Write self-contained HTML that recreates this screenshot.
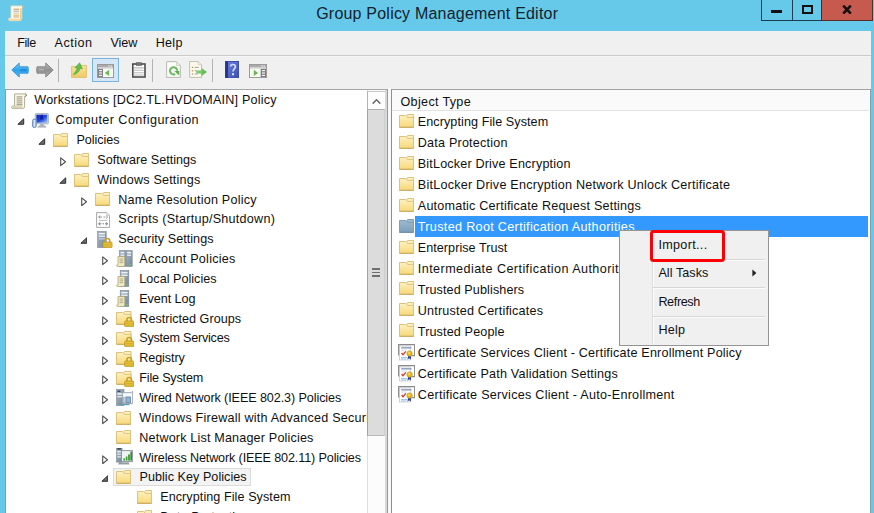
<!DOCTYPE html>
<html><head><meta charset="utf-8"><title>Group Policy Management Editor</title>
<style>
html,body{margin:0;padding:0}
body{width:874px;height:513px;overflow:hidden;position:relative;background:#66c9ea;font-family:"Liberation Sans", Arial, sans-serif;}
.a{position:absolute;line-height:0}
.a svg{display:block}
.t{position:absolute;white-space:nowrap;line-height:16px;height:16px}
.box{position:absolute;box-sizing:border-box}
</style></head><body>

<div class="a" style="left:7.70px;top:5.20px"><svg width="16.5" height="16.5" viewBox="0 0 16.5 16.5" ><path d="M3 0.9 H14 C15.9 0.9 15.9 3.4 14 3.4 H13.8 V12.8 C13.8 14.6 13 15.7 11.4 15.7 H1.8 C0.2 15.7 0.2 13.1 1.8 13.1 H3 Z" fill="#fffcf0" stroke="#ead9ae" stroke-width="0.9"/>
<path d="M12.6 3.6 V13 C12.6 14 12.2 14.8 11.4 15.2" stroke="#ecc98c" stroke-width="1.3" fill="none"/>
<path d="M1.4 14.5 H11.4" stroke="#f2d796" stroke-width="1.5"/>
<path d="M14.2 1.2 C15.6 1.6 15.4 3.2 14.4 3.3" stroke="#8d8f86" stroke-width="0.9" fill="none"/>
<path d="M5.4 4.2 H11" stroke="#c98f5a" stroke-width="1"/><path d="M5.4 6.2 H11" stroke="#a9a79a" stroke-width="1"/><path d="M5.4 8.2 H11" stroke="#c9c7b8" stroke-width="1"/><path d="M5.4 10.2 H11" stroke="#e0b050" stroke-width="1"/><path d="M5.4 12 H11" stroke="#c9a06a" stroke-width="1"/></svg></div>
<div class="t" style="left:316.20px;top:6.46px;font-size:16px;letter-spacing:0.211px;color:#15222a;">Group Policy Management Editor</div>
<div class="box" style="left:761px;top:0;width:32px;height:21px;border-left:1px solid #1d3c52;border-bottom:1px solid #1d3c52;border-right:1px solid #1d3c52"></div>
<div class="box" style="left:792px;top:0;width:30px;height:21px;border-bottom:1px solid #1d3c52;border-right:1px solid #1d3c52"></div>
<div class="box" style="left:822px;top:0;width:50.5px;height:21px;background:#c75a4f;border-bottom:1px solid #5a2a2a;border-right:1px solid #5a2a2a"></div>
<div class="box" style="left:771.3px;top:9.7px;width:11px;height:3.6px;background:#111"></div>
<div class="box" style="left:802.2px;top:5px;width:10.6px;height:8.5px;border:2px solid #111;border-top-width:2.2px"></div>
<div class="a" style="left:842.00px;top:4.50px"><svg width="10" height="9.2" viewBox="0 0 10 9.2" ><path d="M1.2 0.6 L8.8 8.6 M8.8 0.6 L1.2 8.6" stroke="#111" stroke-width="2.6" fill="none"/></svg></div>
<div class="box" style="left:5px;top:30.8px;width:865.8px;height:483px;background:#f0f0f0"></div>
<div class="t" style="left:17.20px;top:35.43px;font-size:12.6px;letter-spacing:-0.432px;color:#101010;">File</div>
<div class="t" style="left:54.50px;top:35.43px;font-size:12.6px;letter-spacing:0.497px;color:#101010;">Action</div>
<div class="t" style="left:110.50px;top:35.43px;font-size:12.6px;letter-spacing:-0.093px;color:#101010;">View</div>
<div class="t" style="left:155.80px;top:35.43px;font-size:12.6px;letter-spacing:0.231px;color:#101010;">Help</div>
<div class="box" style="left:5px;top:55px;width:865.6px;height:1px;background:#cacaca"></div>
<div class="box" style="left:5px;top:56px;width:865.6px;height:1px;background:#f6f6f6"></div>
<div class="a" style="left:10.60px;top:62.40px"><svg width="18" height="16" viewBox="0 0 18 16" ><defs><linearGradient id="g1" x1="0" y1="0" x2="0" y2="1"><stop offset="0" stop-color="#7ccdf6"/><stop offset="0.5" stop-color="#2da3ea"/><stop offset="1" stop-color="#58b6ee"/></linearGradient></defs>
<path d="M0.8 8 L8.2 1 V4.8 H17 Q17.6 8 17 11.2 H8.2 V15 Z" fill="url(#g1)" stroke="#3b9bdc" stroke-width="1" stroke-linejoin="round"/>
<path d="M9.4 8.2 H15.4" stroke="#1b7cd8" stroke-width="2.4" opacity="0.6"/></svg></div>
<div class="a" style="left:36.00px;top:62.40px"><svg width="18" height="16" viewBox="0 0 18 16" ><defs><linearGradient id="g2" x1="0" y1="0" x2="0" y2="1"><stop offset="0" stop-color="#bdbdbd"/><stop offset="0.5" stop-color="#8f8f8f"/><stop offset="1" stop-color="#adadad"/></linearGradient></defs>
<path d="M17.2 8 L9.8 1 V4.8 H1 Q0.4 8 1 11.2 H9.8 V15 Z" fill="url(#g2)" stroke="#8a8a8a" stroke-width="1" stroke-linejoin="round"/>
<path d="M2.6 7.6 H8" stroke="#b9b9b9" stroke-width="1.6" opacity="0.8"/></svg></div>
<div class="box" style="left:58px;top:58.5px;width:1px;height:23px;background:#b4b4b4"></div>
<div class="box" style="left:152.3px;top:58.5px;width:1px;height:23px;background:#b4b4b4"></div>
<div class="box" style="left:211.5px;top:58.5px;width:1px;height:23px;background:#b4b4b4"></div>
<div class="a" style="left:71.20px;top:62.00px"><svg width="16" height="16" viewBox="0 0 16 16" ><defs><linearGradient id="g3" x1="0" y1="0" x2="0" y2="1"><stop offset="0" stop-color="#f8e4a0"/><stop offset="1" stop-color="#f0cb68"/></linearGradient></defs>
<path d="M0.6 4.6 H6.4 L7.6 3.4 H15.4 V15.4 H0.6 Z" fill="url(#g3)" stroke="#dcbc66" stroke-width="0.9"/>
<path d="M2.4 12.8 C3.6 10.4 5.6 8.8 6.4 6.2 L4 5.8 L8.6 0.8 L11.4 6.8 L9 6.4 C8.4 9.6 6.4 11.4 2.4 12.8 Z" fill="#62bf50" stroke="#46a838" stroke-width="0.6"/></svg></div>
<div class="box" style="left:92.3px;top:57.6px;width:26.4px;height:24px;background:#d5e7f6;border:1.6px solid #78b4e2"></div>
<div class="a" style="left:97.00px;top:64.00px"><svg width="17" height="14" viewBox="0 0 17 14" ><rect x="0.5" y="0.5" width="16" height="13" fill="#fbfbfb" stroke="#9a9a9a" stroke-width="1"/>
<rect x="1" y="1" width="15" height="2.6" fill="#ababab"/>
<rect x="11.4" y="1.4" width="1.3" height="1.3" fill="#e8e8e8"/><rect x="13.6" y="1.4" width="1.3" height="1.3" fill="#e8e8e8"/>
<rect x="1" y="3.6" width="15" height="1.2" fill="#d9d9d9"/>
<rect x="1" y="4.8" width="5" height="8.2" fill="#7f7f7f"/>
<rect x="2" y="6" width="3" height="1.2" fill="#f5f5f5"/><rect x="2" y="8.4" width="3" height="1.2" fill="#f5f5f5"/><rect x="2" y="10.8" width="3" height="1.2" fill="#f5f5f5"/>
<rect x="6.4" y="5" width="9.4" height="7.8" fill="#f4faef"/>
<path d="M12.2 5.8 V12 L7.8 8.9 Z" fill="#71b25c"/></svg></div>
<div class="a" style="left:131.60px;top:61.60px"><svg width="14" height="16" viewBox="0 0 14 16" ><rect x="0.8" y="2" width="12.2" height="13" fill="#ffffff" stroke="#4c4c4c" stroke-width="1.6"/>
<path d="M4.2 0.7 H9.6 V3.4 H4.2 Z" fill="#7c7c7c" stroke="#555" stroke-width="0.7"/>
<path d="M2 5.9 H11.8 M2 8.3 H11.8 M2 10.7 H11.8 M2 13 H11.8" stroke="#b9b9b9" stroke-width="1.1"/></svg></div>
<div class="a" style="left:165.60px;top:61.00px"><svg width="15" height="17" viewBox="0 0 15 17" ><path d="M0.6 0.6 H10.4 L14.4 4.4 V16.4 H0.6 Z" fill="#fafaf7" stroke="#b4b4ac" stroke-width="0.9"/>
<path d="M10.4 0.6 V4.4 H14.4" fill="#ecece6" stroke="#c6c6bd" stroke-width="0.7"/>
<path d="M11.2 9.8 A3.6 3.6 0 1 0 9.2 13" fill="none" stroke="#6cba62" stroke-width="2"/>
<path d="M8.4 10 H13.2 V14.6 Z" fill="#58ad4e"/></svg></div>
<div class="a" style="left:189.00px;top:61.00px"><svg width="18" height="17" viewBox="0 0 18 17" ><defs><linearGradient id="g4" x1="0" y1="0" x2="1" y2="0"><stop offset="0" stop-color="#9bd68c"/><stop offset="1" stop-color="#4fb43e"/></linearGradient></defs>
<path d="M0.6 0.6 H9.2 L12.6 3.8 V16.4 H0.6 Z" fill="#fcfaef" stroke="#bdb8a2" stroke-width="0.9"/>
<path d="M9.2 0.6 V3.8 H12.6" fill="#efead6" stroke="#cfc8ae" stroke-width="0.7"/>
<rect x="2.8" y="5.8" width="1.2" height="1.2" fill="#b98a3e"/><rect x="2.8" y="9.2" width="1.2" height="1.2" fill="#b98a3e"/><rect x="2.8" y="12.4" width="1.2" height="1.2" fill="#b98a3e"/>
<path d="M5.6 6.4 H9.8 M5.6 9.8 H7.6 M5.6 13 H8.6" stroke="#a4a49c" stroke-width="1"/>
<path d="M7.6 9.8 H12.8 V7.6 L17.6 11 L12.8 14.4 V12.2 H7.6 Z" fill="url(#g4)" stroke="#63b955" stroke-width="0.5"/></svg></div>
<div class="a" style="left:224.60px;top:61.00px"><svg width="14" height="17" viewBox="0 0 14 17" ><defs><linearGradient id="g5" x1="0" y1="0" x2="1" y2="1"><stop offset="0" stop-color="#6c80dc"/><stop offset="1" stop-color="#3a50b8"/></linearGradient></defs>
<rect x="0.4" y="0.4" width="13.2" height="16.4" fill="url(#g5)" stroke="#2c3c96" stroke-width="0.8"/>
<rect x="0.4" y="0.4" width="2.6" height="16.4" fill="#26348c"/>
<path d="M5.6 5.6 C5.6 2.8 10.4 2.8 10.4 5.6 C10.4 7.8 8 8 8 10.6" fill="none" stroke="#d4dcfa" stroke-width="1.7"/>
<rect x="7" y="12.2" width="2" height="2" fill="#e6ebfd"/></svg></div>
<div class="a" style="left:249.00px;top:64.20px"><svg width="18" height="14" viewBox="0 0 18 14" ><rect x="0.5" y="0.5" width="17" height="13" fill="#fbfbfb" stroke="#9a9a9a" stroke-width="1"/>
<rect x="1" y="1" width="16" height="2.6" fill="#ababab"/>
<rect x="12.4" y="1.4" width="1.3" height="1.3" fill="#e8e8e8"/><rect x="14.6" y="1.4" width="1.3" height="1.3" fill="#e8e8e8"/>
<rect x="1" y="3.6" width="16" height="1.2" fill="#d9d9d9"/>
<rect x="11.6" y="4.8" width="5.4" height="8.2" fill="#7f7f7f"/>
<rect x="13" y="6" width="3" height="1.2" fill="#f5f5f5"/><rect x="13" y="8.4" width="3" height="1.2" fill="#f5f5f5"/><rect x="13" y="10.8" width="3" height="1.2" fill="#f5f5f5"/>
<rect x="1.2" y="5" width="10" height="7.8" fill="#f4faef"/>
<path d="M4.8 5.8 V12 L9.2 8.9 Z" fill="#71b25c"/></svg></div>
<div class="box" style="left:4.8px;top:88.5px;width:383.2px;height:430px;background:#fff;border:1px solid #a6a6a6;border-left-color:#789fb8;overflow:hidden"></div>
<div class="box" style="left:6px;top:89.5px;width:361px;height:424px;overflow:hidden">
<div class="a" style="left:4.80px;top:3.45px"><svg width="16.5" height="16.5" viewBox="0 0 16.5 16.5" ><path d="M3.6 0.9 H14.2 C16.1 0.9 16.1 3.4 14.2 3.4 H13.6 V12.8 C13.6 14.6 12.8 15.7 11.2 15.7 H1.8 C0.2 15.7 0.2 13.1 1.8 13.1 H3.6 Z" fill="#fcf9e8" stroke="#aaa38a" stroke-width="0.9"/>
<path d="M1.6 14.4 H11.4" stroke="#dcd3b2" stroke-width="1.3"/>
<path d="M14.2 1.2 C15.8 1.6 15.6 3.2 14.4 3.3" stroke="#77766c" stroke-width="0.9" fill="none"/>
<path d="M3.6 13.1 H11.4" stroke="#bdb497" stroke-width="0.7"/>
<path d="M5.6 3.9 H11.4 M5.6 5.9 H11.4 M5.6 7.9 H11.4 M5.6 9.9 H11.4 M5.6 11.7 H11.4" stroke="#8c8a7c" stroke-width="0.95"/></svg></div>
<div class="t" style="left:28.30px;top:2.88px;font-size:12.6px;letter-spacing:0.203px;color:#101010;">Workstations [DC2.TL.HVDOMAIN] Policy</div>
<div class="a" style="left:25.95px;top:23.49px"><svg width="17" height="15" viewBox="0 0 17 15" ><defs><linearGradient id="g6" x1="0" y1="0" x2="1" y2="1"><stop offset="0" stop-color="#0a1fb8"/><stop offset="0.55" stop-color="#2a4fe0"/><stop offset="1" stop-color="#9fc4f4"/></linearGradient></defs>
<rect x="3.2" y="0.6" width="13.2" height="10.2" rx="0.8" fill="#c9d4de" stroke="#9aa9b8" stroke-width="0.8"/>
<rect x="4.4" y="1.8" width="10.8" height="7.8" fill="url(#g6)"/>
<path d="M9 1.8 L7.6 6.5 H11.5 L10.6 1.8 Z" fill="#0a1aa0" opacity="0.85"/>
<rect x="8.2" y="10.8" width="3.4" height="2" fill="#aab2ba"/>
<path d="M5.6 14.2 L7 12.8 H12.8 L14.2 14.2 Z" fill="#b9c0c7" stroke="#8f979f" stroke-width="0.5"/>
<rect x="0.6" y="6" width="3.6" height="8.6" rx="1.6" fill="#a9c6ec" stroke="#5b83c0" stroke-width="0.9"/>
<path d="M2.4 7 V13.6" stroke="#e9f2fc" stroke-width="0.9"/></svg></div>
<div class="a" style="left:11.25px;top:28.39px"><svg width="7.4" height="7" viewBox="0 0 7.4 7" ><path d="M6.7 0.8 V6.3 H0.9 Z" fill="#6a6a6a" stroke="#2e2e2e" stroke-width="1" stroke-linejoin="round"/></svg></div>
<div class="t" style="left:49.60px;top:22.73px;font-size:12.6px;letter-spacing:0.442px;color:#101010;">Computer Configuration</div>
<div class="a" style="left:47.40px;top:43.33px"><svg width="15" height="14" viewBox="0 0 15 14" ><defs><linearGradient id="g7" x1="0" y1="0" x2="0" y2="1"><stop offset="0" stop-color="#fdf1c0"/><stop offset="1" stop-color="#f8d878"/></linearGradient></defs>
<path d="M7.2 3.2 L8.6 0.5 H14.5 V13 H7.2 Z" fill="#fdf1c0" stroke="#dcc27c" stroke-width="1"/>
<path d="M0.5 1.5 H6.6 C7.6 1.5 7.4 3.4 8.6 3.4 H14.5 V13.3 H0.5 Z" fill="url(#g7)" stroke="#dcc27c" stroke-width="1"/>
<path d="M0.5 13.3 H14.5" stroke="#c9aa5e" stroke-width="1" fill="none"/></svg></div>
<div class="a" style="left:32.20px;top:48.23px"><svg width="7.4" height="7" viewBox="0 0 7.4 7" ><path d="M6.7 0.8 V6.3 H0.9 Z" fill="#6a6a6a" stroke="#2e2e2e" stroke-width="1" stroke-linejoin="round"/></svg></div>
<div class="t" style="left:70.50px;top:42.57px;font-size:12.6px;letter-spacing:-0.044px;color:#101010;">Policies</div>
<div class="a" style="left:68.35px;top:63.18px"><svg width="15" height="14" viewBox="0 0 15 14" ><defs><linearGradient id="g8" x1="0" y1="0" x2="0" y2="1"><stop offset="0" stop-color="#fdf1c0"/><stop offset="1" stop-color="#f8d878"/></linearGradient></defs>
<path d="M7.2 3.2 L8.6 0.5 H14.5 V13 H7.2 Z" fill="#fdf1c0" stroke="#dcc27c" stroke-width="1"/>
<path d="M0.5 1.5 H6.6 C7.6 1.5 7.4 3.4 8.6 3.4 H14.5 V13.3 H0.5 Z" fill="url(#g8)" stroke="#dcc27c" stroke-width="1"/>
<path d="M0.5 13.3 H14.5" stroke="#c9aa5e" stroke-width="1" fill="none"/></svg></div>
<div class="a" style="left:54.35px;top:67.58px"><svg width="6.4" height="9.6" viewBox="0 0 6.4 9.6" ><path d="M0.7 0.9 V8.7 L5.5 4.8 Z" fill="#fff" stroke="#4e4e4e" stroke-width="1.1" stroke-linejoin="round"/></svg></div>
<div class="t" style="left:91.30px;top:62.41px;font-size:12.6px;letter-spacing:0.025px;color:#101010;">Software Settings</div>
<div class="a" style="left:68.35px;top:83.02px"><svg width="15" height="14" viewBox="0 0 15 14" ><defs><linearGradient id="g9" x1="0" y1="0" x2="0" y2="1"><stop offset="0" stop-color="#fdf1c0"/><stop offset="1" stop-color="#f8d878"/></linearGradient></defs>
<path d="M7.2 3.2 L8.6 0.5 H14.5 V13 H7.2 Z" fill="#fdf1c0" stroke="#dcc27c" stroke-width="1"/>
<path d="M0.5 1.5 H6.6 C7.6 1.5 7.4 3.4 8.6 3.4 H14.5 V13.3 H0.5 Z" fill="url(#g9)" stroke="#dcc27c" stroke-width="1"/>
<path d="M0.5 13.3 H14.5" stroke="#c9aa5e" stroke-width="1" fill="none"/></svg></div>
<div class="a" style="left:53.15px;top:87.92px"><svg width="7.4" height="7" viewBox="0 0 7.4 7" ><path d="M6.7 0.8 V6.3 H0.9 Z" fill="#6a6a6a" stroke="#2e2e2e" stroke-width="1" stroke-linejoin="round"/></svg></div>
<div class="t" style="left:91.30px;top:82.25px;font-size:12.6px;letter-spacing:0.187px;color:#101010;">Windows Settings</div>
<div class="a" style="left:89.30px;top:102.86px"><svg width="15" height="14" viewBox="0 0 15 14" ><defs><linearGradient id="g10" x1="0" y1="0" x2="0" y2="1"><stop offset="0" stop-color="#fdf1c0"/><stop offset="1" stop-color="#f8d878"/></linearGradient></defs>
<path d="M7.2 3.2 L8.6 0.5 H14.5 V13 H7.2 Z" fill="#fdf1c0" stroke="#dcc27c" stroke-width="1"/>
<path d="M0.5 1.5 H6.6 C7.6 1.5 7.4 3.4 8.6 3.4 H14.5 V13.3 H0.5 Z" fill="url(#g10)" stroke="#dcc27c" stroke-width="1"/>
<path d="M0.5 13.3 H14.5" stroke="#c9aa5e" stroke-width="1" fill="none"/></svg></div>
<div class="a" style="left:75.30px;top:107.26px"><svg width="6.4" height="9.6" viewBox="0 0 6.4 9.6" ><path d="M0.7 0.9 V8.7 L5.5 4.8 Z" fill="#fff" stroke="#4e4e4e" stroke-width="1.1" stroke-linejoin="round"/></svg></div>
<div class="t" style="left:112.30px;top:102.09px;font-size:12.6px;letter-spacing:0.214px;color:#101010;">Name Resolution Policy</div>
<div class="a" style="left:89.80px;top:122.60px"><svg width="14" height="16" viewBox="0 0 14 16" ><path d="M0.6 0.6 H10.8 L13.6 3.4 V15.4 H0.6 Z" fill="#ffffff" stroke="#a6a6a6" stroke-width="1"/>
<path d="M10.8 0.6 V3.4 H13.6" fill="#f1f1f1" stroke="#bdbdbd" stroke-width="0.7"/>
<path d="M4.2 3.6 L2.6 5 L4.2 6.4 M2.8 5 H6 M7.4 5 H9.2 M10 3.6 L11.6 5 L10 6.4" fill="none" stroke="#8d8d8d" stroke-width="0.9"/>
<path d="M3 8.4 H11.2" stroke="#b5b5b5" stroke-width="0.9"/>
<path d="M4.2 10.4 L2.6 11.8 L4.2 13.2 M2.8 11.8 H5.4 M6.6 11.8 H8 M10 10.4 L11.6 11.8 L10 13.2 M9 11.8 H11.4" fill="none" stroke="#6f6f6f" stroke-width="0.9"/></svg></div>
<div class="t" style="left:112.30px;top:121.94px;font-size:12.6px;letter-spacing:0.244px;color:#101010;">Scripts (Startup/Shutdown)</div>
<div class="a" style="left:90.70px;top:141.14px"><svg width="16" height="17" viewBox="0 0 16 17" ><defs><linearGradient id="g11" x1="0" y1="0" x2="1" y2="1"><stop offset="0" stop-color="#a9b5c0"/><stop offset="1" stop-color="#74889a"/></linearGradient></defs><rect x="0.6" y="0.5" width="8.6" height="16" fill="url(#g11)" stroke="#7b8894" stroke-width="0.6"/>
<rect x="1.7999999999999998" y="1.9" width="6.199999999999999" height="1.5" fill="#eef3f8"/>
<rect x="1.7999999999999998" y="4.5" width="6.199999999999999" height="1.5" fill="#dfe8f0"/>
<rect x="6.6" y="13.9" width="1.6" height="1.6" fill="#7fbf6a"/><rect x="1.8" y="7.2" width="6.2" height="1.2" fill="#c8d2dc"/><path d="M8.2 11.3 V9.8 a2.3 2.3 0 0 1 4.6 0 V11.3" fill="none" stroke="#c9a227" stroke-width="1.6"/>
<rect x="6" y="11.1" width="9" height="5.7" rx="0.8" fill="#e9c53a" stroke="#b8901c" stroke-width="0.8"/>
<path d="M6.8 13.399999999999999 H14.2 M6.8 15.100000000000001 H14.2" stroke="#c9a227" stroke-width="0.7"/></svg></div>
<div class="a" style="left:74.10px;top:147.44px"><svg width="7.4" height="7" viewBox="0 0 7.4 7" ><path d="M6.7 0.8 V6.3 H0.9 Z" fill="#6a6a6a" stroke="#2e2e2e" stroke-width="1" stroke-linejoin="round"/></svg></div>
<div class="t" style="left:112.30px;top:141.78px;font-size:12.6px;letter-spacing:0.044px;color:#101010;">Security Settings</div>
<div class="a" style="left:109.75px;top:160.79px"><svg width="17" height="17" viewBox="0 0 17 17" ><defs><linearGradient id="g12" x1="0" y1="0" x2="1" y2="1"><stop offset="0" stop-color="#a9b5c0"/><stop offset="1" stop-color="#74889a"/></linearGradient></defs><rect x="3.4" y="0.5" width="6.2" height="16" fill="url(#g12)" stroke="#7b8894" stroke-width="0.6"/>
<rect x="4.6" y="1.9" width="3.8000000000000003" height="1.5" fill="#eef3f8"/>
<rect x="4.6" y="4.5" width="3.8000000000000003" height="1.5" fill="#dfe8f0"/>
<rect x="7.0" y="13.9" width="1.6" height="1.6" fill="#7fbf6a"/><rect x="10" y="0.5" width="6.2" height="16" fill="url(#g12)" stroke="#7b8894" stroke-width="0.6"/>
<rect x="11.2" y="1.9" width="3.8000000000000003" height="1.5" fill="#eef3f8"/>
<rect x="11.2" y="4.5" width="3.8000000000000003" height="1.5" fill="#dfe8f0"/>
<rect x="13.6" y="13.9" width="1.6" height="1.6" fill="#7fbf6a"/><path d="M2.0 6.6 H8.8 V14.799999999999999 C8.8 16.2 7.8 16.6 6.8 16.6 H1.4 C0.4 16.6 0.4 14.799999999999999 1.4 14.799999999999999 H2.0 Z" fill="#f1e9c4" stroke="#a89d70" stroke-width="0.75"/>
<path d="M3.5999999999999996 9.0 H7.2 M3.5999999999999996 10.8 H7.2 M3.5999999999999996 12.6 H7.2" stroke="#a39a78" stroke-width="0.8"/></svg></div>
<div class="a" style="left:96.25px;top:166.79px"><svg width="6.4" height="9.6" viewBox="0 0 6.4 9.6" ><path d="M0.7 0.9 V8.7 L5.5 4.8 Z" fill="#fff" stroke="#4e4e4e" stroke-width="1.1" stroke-linejoin="round"/></svg></div>
<div class="t" style="left:133.30px;top:161.62px;font-size:12.6px;letter-spacing:0.24px;color:#101010;">Account Policies</div>
<div class="a" style="left:109.75px;top:180.63px"><svg width="14" height="17" viewBox="0 0 14 17" ><defs><linearGradient id="g13" x1="0" y1="0" x2="1" y2="1"><stop offset="0" stop-color="#a9b5c0"/><stop offset="1" stop-color="#74889a"/></linearGradient></defs><rect x="4.2" y="0.5" width="8.6" height="16" fill="url(#g13)" stroke="#7b8894" stroke-width="0.6"/>
<rect x="5.4" y="1.9" width="6.199999999999999" height="1.5" fill="#eef3f8"/>
<rect x="5.4" y="4.5" width="6.199999999999999" height="1.5" fill="#dfe8f0"/>
<rect x="10.200000000000001" y="13.9" width="1.6" height="1.6" fill="#7fbf6a"/><path d="M2.0 6.6 H8.8 V14.799999999999999 C8.8 16.2 7.8 16.6 6.8 16.6 H1.4 C0.4 16.6 0.4 14.799999999999999 1.4 14.799999999999999 H2.0 Z" fill="#f1e9c4" stroke="#a89d70" stroke-width="0.75"/>
<path d="M3.5999999999999996 9.0 H7.2 M3.5999999999999996 10.8 H7.2 M3.5999999999999996 12.6 H7.2" stroke="#a39a78" stroke-width="0.8"/></svg></div>
<div class="a" style="left:96.25px;top:186.63px"><svg width="6.4" height="9.6" viewBox="0 0 6.4 9.6" ><path d="M0.7 0.9 V8.7 L5.5 4.8 Z" fill="#fff" stroke="#4e4e4e" stroke-width="1.1" stroke-linejoin="round"/></svg></div>
<div class="t" style="left:133.30px;top:181.46px;font-size:12.6px;letter-spacing:0.022px;color:#101010;">Local Policies</div>
<div class="a" style="left:109.75px;top:200.47px"><svg width="14" height="17" viewBox="0 0 14 17" ><defs><linearGradient id="g14" x1="0" y1="0" x2="1" y2="1"><stop offset="0" stop-color="#a9b5c0"/><stop offset="1" stop-color="#74889a"/></linearGradient></defs><rect x="4.2" y="0.5" width="8.6" height="16" fill="url(#g14)" stroke="#7b8894" stroke-width="0.6"/>
<rect x="5.4" y="1.9" width="6.199999999999999" height="1.5" fill="#eef3f8"/>
<rect x="5.4" y="4.5" width="6.199999999999999" height="1.5" fill="#dfe8f0"/>
<rect x="10.200000000000001" y="13.9" width="1.6" height="1.6" fill="#7fbf6a"/><path d="M2.0 6.6 H8.8 V14.799999999999999 C8.8 16.2 7.8 16.6 6.8 16.6 H1.4 C0.4 16.6 0.4 14.799999999999999 1.4 14.799999999999999 H2.0 Z" fill="#f1e9c4" stroke="#a89d70" stroke-width="0.75"/>
<path d="M3.5999999999999996 9.0 H7.2 M3.5999999999999996 10.8 H7.2 M3.5999999999999996 12.6 H7.2" stroke="#a39a78" stroke-width="0.8"/></svg></div>
<div class="a" style="left:96.25px;top:206.47px"><svg width="6.4" height="9.6" viewBox="0 0 6.4 9.6" ><path d="M0.7 0.9 V8.7 L5.5 4.8 Z" fill="#fff" stroke="#4e4e4e" stroke-width="1.1" stroke-linejoin="round"/></svg></div>
<div class="t" style="left:133.30px;top:201.30px;font-size:12.6px;letter-spacing:-0.077px;color:#101010;">Event Log</div>
<div class="a" style="left:110.05px;top:221.61px"><svg width="18" height="16" viewBox="0 0 18 16" ><defs><linearGradient id="g15" x1="0" y1="0" x2="0" y2="1"><stop offset="0" stop-color="#fdf1c0"/><stop offset="1" stop-color="#f8d878"/></linearGradient></defs>
<path d="M7.2 3.2 L8.6 0.5 H15 V13 H7.2 Z" fill="#fdf1c0" stroke="#dcc27c" stroke-width="1"/>
<path d="M0.5 1.5 H6.6 C7.6 1.5 7.4 3.4 8.6 3.4 H15 V13.3 H0.5 Z" fill="url(#g15)" stroke="#dcc27c" stroke-width="1"/>
<path d="M0.5 13.3 H15" stroke="#c9aa5e" stroke-width="1" fill="none"/><path d="M10.899999999999999 10.3 V8.8 a2.3 2.3 0 0 1 4.6 0 V10.3" fill="none" stroke="#c9a227" stroke-width="1.6"/>
<rect x="8.7" y="10.1" width="9" height="5.7" rx="0.8" fill="#e9c53a" stroke="#b8901c" stroke-width="0.8"/>
<path d="M9.5 12.399999999999999 H16.9 M9.5 14.100000000000001 H16.9" stroke="#c9a227" stroke-width="0.7"/></svg></div>
<div class="a" style="left:96.25px;top:226.31px"><svg width="6.4" height="9.6" viewBox="0 0 6.4 9.6" ><path d="M0.7 0.9 V8.7 L5.5 4.8 Z" fill="#fff" stroke="#4e4e4e" stroke-width="1.1" stroke-linejoin="round"/></svg></div>
<div class="t" style="left:133.30px;top:221.15px;font-size:12.6px;letter-spacing:0.012px;color:#101010;">Restricted Groups</div>
<div class="a" style="left:110.05px;top:241.45px"><svg width="18" height="16" viewBox="0 0 18 16" ><defs><linearGradient id="g16" x1="0" y1="0" x2="0" y2="1"><stop offset="0" stop-color="#fdf1c0"/><stop offset="1" stop-color="#f8d878"/></linearGradient></defs>
<path d="M7.2 3.2 L8.6 0.5 H15 V13 H7.2 Z" fill="#fdf1c0" stroke="#dcc27c" stroke-width="1"/>
<path d="M0.5 1.5 H6.6 C7.6 1.5 7.4 3.4 8.6 3.4 H15 V13.3 H0.5 Z" fill="url(#g16)" stroke="#dcc27c" stroke-width="1"/>
<path d="M0.5 13.3 H15" stroke="#c9aa5e" stroke-width="1" fill="none"/><path d="M10.899999999999999 10.3 V8.8 a2.3 2.3 0 0 1 4.6 0 V10.3" fill="none" stroke="#c9a227" stroke-width="1.6"/>
<rect x="8.7" y="10.1" width="9" height="5.7" rx="0.8" fill="#e9c53a" stroke="#b8901c" stroke-width="0.8"/>
<path d="M9.5 12.399999999999999 H16.9 M9.5 14.100000000000001 H16.9" stroke="#c9a227" stroke-width="0.7"/></svg></div>
<div class="a" style="left:96.25px;top:246.15px"><svg width="6.4" height="9.6" viewBox="0 0 6.4 9.6" ><path d="M0.7 0.9 V8.7 L5.5 4.8 Z" fill="#fff" stroke="#4e4e4e" stroke-width="1.1" stroke-linejoin="round"/></svg></div>
<div class="t" style="left:133.30px;top:240.99px;font-size:12.6px;letter-spacing:-0.242px;color:#101010;">System Services</div>
<div class="a" style="left:110.05px;top:261.30px"><svg width="18" height="16" viewBox="0 0 18 16" ><defs><linearGradient id="g17" x1="0" y1="0" x2="0" y2="1"><stop offset="0" stop-color="#fdf1c0"/><stop offset="1" stop-color="#f8d878"/></linearGradient></defs>
<path d="M7.2 3.2 L8.6 0.5 H15 V13 H7.2 Z" fill="#fdf1c0" stroke="#dcc27c" stroke-width="1"/>
<path d="M0.5 1.5 H6.6 C7.6 1.5 7.4 3.4 8.6 3.4 H15 V13.3 H0.5 Z" fill="url(#g17)" stroke="#dcc27c" stroke-width="1"/>
<path d="M0.5 13.3 H15" stroke="#c9aa5e" stroke-width="1" fill="none"/><path d="M10.899999999999999 10.3 V8.8 a2.3 2.3 0 0 1 4.6 0 V10.3" fill="none" stroke="#c9a227" stroke-width="1.6"/>
<rect x="8.7" y="10.1" width="9" height="5.7" rx="0.8" fill="#e9c53a" stroke="#b8901c" stroke-width="0.8"/>
<path d="M9.5 12.399999999999999 H16.9 M9.5 14.100000000000001 H16.9" stroke="#c9a227" stroke-width="0.7"/></svg></div>
<div class="a" style="left:96.25px;top:266.00px"><svg width="6.4" height="9.6" viewBox="0 0 6.4 9.6" ><path d="M0.7 0.9 V8.7 L5.5 4.8 Z" fill="#fff" stroke="#4e4e4e" stroke-width="1.1" stroke-linejoin="round"/></svg></div>
<div class="t" style="left:133.30px;top:260.83px;font-size:12.6px;letter-spacing:-0.098px;color:#101010;">Registry</div>
<div class="a" style="left:110.05px;top:281.14px"><svg width="18" height="16" viewBox="0 0 18 16" ><defs><linearGradient id="g18" x1="0" y1="0" x2="0" y2="1"><stop offset="0" stop-color="#fdf1c0"/><stop offset="1" stop-color="#f8d878"/></linearGradient></defs>
<path d="M7.2 3.2 L8.6 0.5 H15 V13 H7.2 Z" fill="#fdf1c0" stroke="#dcc27c" stroke-width="1"/>
<path d="M0.5 1.5 H6.6 C7.6 1.5 7.4 3.4 8.6 3.4 H15 V13.3 H0.5 Z" fill="url(#g18)" stroke="#dcc27c" stroke-width="1"/>
<path d="M0.5 13.3 H15" stroke="#c9aa5e" stroke-width="1" fill="none"/><path d="M10.899999999999999 10.3 V8.8 a2.3 2.3 0 0 1 4.6 0 V10.3" fill="none" stroke="#c9a227" stroke-width="1.6"/>
<rect x="8.7" y="10.1" width="9" height="5.7" rx="0.8" fill="#e9c53a" stroke="#b8901c" stroke-width="0.8"/>
<path d="M9.5 12.399999999999999 H16.9 M9.5 14.100000000000001 H16.9" stroke="#c9a227" stroke-width="0.7"/></svg></div>
<div class="a" style="left:96.25px;top:285.84px"><svg width="6.4" height="9.6" viewBox="0 0 6.4 9.6" ><path d="M0.7 0.9 V8.7 L5.5 4.8 Z" fill="#fff" stroke="#4e4e4e" stroke-width="1.1" stroke-linejoin="round"/></svg></div>
<div class="t" style="left:133.30px;top:280.67px;font-size:12.6px;letter-spacing:-0.188px;color:#101010;">File System</div>
<div class="a" style="left:109.75px;top:299.18px"><svg width="17" height="17" viewBox="0 0 17 17" ><defs><linearGradient id="g19" x1="0" y1="0" x2="1" y2="1"><stop offset="0" stop-color="#a9b5c0"/><stop offset="1" stop-color="#74889a"/></linearGradient></defs><rect x="0.5" y="0.5" width="7.5" height="16" fill="url(#g19)" stroke="#7b8894" stroke-width="0.6"/>
<rect x="1.4" y="1.6" width="3" height="1.3" fill="#2a3c6a"/><rect x="1.4" y="4.2" width="5.6" height="1.6" fill="#eef3f8"/><rect x="1.4" y="7" width="5.6" height="1.4" fill="#dfe8f0"/>
<path d="M6.4 3.6 H15.4 L16.6 2.2 V14.6 H6.4 Z" fill="#f4f6f8" stroke="#8e99a4" stroke-width="0.8"/>
<rect x="10" y="8" width="4.4" height="5.8" fill="#8fb6d6" stroke="#5f7f9c" stroke-width="0.8"/>
<rect x="7.4" y="8.6" width="2" height="5.2" fill="#c8d0d8" stroke="#8e99a4" stroke-width="0.5"/>
<path d="M3 15.6 H13.4" stroke="#5fa0b8" stroke-width="1.2"/></svg></div>
<div class="a" style="left:96.25px;top:305.68px"><svg width="6.4" height="9.6" viewBox="0 0 6.4 9.6" ><path d="M0.7 0.9 V8.7 L5.5 4.8 Z" fill="#fff" stroke="#4e4e4e" stroke-width="1.1" stroke-linejoin="round"/></svg></div>
<div class="t" style="left:133.30px;top:300.51px;font-size:12.6px;letter-spacing:-0.091px;color:#101010;">Wired Network (IEEE 802.3) Policies</div>
<div class="a" style="left:110.25px;top:321.12px"><svg width="15" height="14" viewBox="0 0 15 14" ><defs><linearGradient id="g20" x1="0" y1="0" x2="0" y2="1"><stop offset="0" stop-color="#fdf1c0"/><stop offset="1" stop-color="#f8d878"/></linearGradient></defs>
<path d="M7.2 3.2 L8.6 0.5 H14.5 V13 H7.2 Z" fill="#fdf1c0" stroke="#dcc27c" stroke-width="1"/>
<path d="M0.5 1.5 H6.6 C7.6 1.5 7.4 3.4 8.6 3.4 H14.5 V13.3 H0.5 Z" fill="url(#g20)" stroke="#dcc27c" stroke-width="1"/>
<path d="M0.5 13.3 H14.5" stroke="#c9aa5e" stroke-width="1" fill="none"/></svg></div>
<div class="a" style="left:96.25px;top:325.52px"><svg width="6.4" height="9.6" viewBox="0 0 6.4 9.6" ><path d="M0.7 0.9 V8.7 L5.5 4.8 Z" fill="#fff" stroke="#4e4e4e" stroke-width="1.1" stroke-linejoin="round"/></svg></div>
<div class="t" style="left:133.30px;top:320.36px;font-size:12.6px;letter-spacing:0.217px;color:#101010;">Windows Firewall with Advanced Security</div>
<div class="a" style="left:110.25px;top:340.96px"><svg width="15" height="14" viewBox="0 0 15 14" ><defs><linearGradient id="g21" x1="0" y1="0" x2="0" y2="1"><stop offset="0" stop-color="#fdf1c0"/><stop offset="1" stop-color="#f8d878"/></linearGradient></defs>
<path d="M7.2 3.2 L8.6 0.5 H14.5 V13 H7.2 Z" fill="#fdf1c0" stroke="#dcc27c" stroke-width="1"/>
<path d="M0.5 1.5 H6.6 C7.6 1.5 7.4 3.4 8.6 3.4 H14.5 V13.3 H0.5 Z" fill="url(#g21)" stroke="#dcc27c" stroke-width="1"/>
<path d="M0.5 13.3 H14.5" stroke="#c9aa5e" stroke-width="1" fill="none"/></svg></div>
<div class="t" style="left:133.30px;top:340.20px;font-size:12.6px;letter-spacing:0.168px;color:#101010;">Network List Manager Policies</div>
<div class="a" style="left:109.95px;top:358.81px"><svg width="17" height="17" viewBox="0 0 17 17" ><defs><linearGradient id="g22" x1="0" y1="0" x2="1" y2="1"><stop offset="0" stop-color="#a9b5c0"/><stop offset="1" stop-color="#74889a"/></linearGradient></defs><rect x="0.5" y="0.5" width="5.6" height="13.6" fill="url(#g22)" stroke="#7b8894" stroke-width="0.6"/>
<rect x="1.3" y="0.2" width="3.8" height="1.3" fill="#2a3040"/>
<rect x="1.3" y="3" width="4" height="1.4" fill="#eef3f8"/><rect x="1.3" y="5.6" width="4" height="1.3" fill="#dfe8f0"/><rect x="1.3" y="8.2" width="4" height="1.3" fill="#dfe8f0"/>
<path d="M5.4 2.6 H16.6 V13.6 H5.4 Z" fill="#eef2f2" stroke="#7f8a8f" stroke-width="0.9"/>
<path d="M6.8 12.6 L15.8 4 V12.6 Z" fill="#d5ead2"/>
<rect x="7.4" y="10.4" width="1.6" height="2.2" fill="#3f9e3a"/><rect x="9.8" y="8.6" width="1.6" height="4" fill="#3f9e3a"/><rect x="12.2" y="6.4" width="1.6" height="6.2" fill="#2f8e2c"/><rect x="14.4" y="3.6" width="1.6" height="9" fill="#2f8e2c"/>
<path d="M2.6 15.2 H13" stroke="#8e979c" stroke-width="1.6"/>
<path d="M2.2 16.4 H13.4" stroke="#b9c0c4" stroke-width="0.8"/></svg></div>
<div class="a" style="left:96.25px;top:365.21px"><svg width="6.4" height="9.6" viewBox="0 0 6.4 9.6" ><path d="M0.7 0.9 V8.7 L5.5 4.8 Z" fill="#fff" stroke="#4e4e4e" stroke-width="1.1" stroke-linejoin="round"/></svg></div>
<div class="t" style="left:133.30px;top:360.04px;font-size:12.6px;letter-spacing:-0.127px;color:#101010;">Wireless Network (IEEE 802.11) Policies</div>
<div class="box" style="left:107.2px;top:378.3px;width:137.6px;height:18.6px;background:#f3f3f4;border:1px solid #dcdcdc"></div>
<div class="a" style="left:110.25px;top:380.65px"><svg width="15" height="14" viewBox="0 0 15 14" ><defs><linearGradient id="g23" x1="0" y1="0" x2="0" y2="1"><stop offset="0" stop-color="#fdf1c0"/><stop offset="1" stop-color="#f8d878"/></linearGradient></defs>
<path d="M7.2 3.2 L8.6 0.5 H14.5 V13 H7.2 Z" fill="#fdf1c0" stroke="#dcc27c" stroke-width="1"/>
<path d="M0.5 1.5 H6.6 C7.6 1.5 7.4 3.4 8.6 3.4 H14.5 V13.3 H0.5 Z" fill="url(#g23)" stroke="#dcc27c" stroke-width="1"/>
<path d="M0.5 13.3 H14.5" stroke="#c9aa5e" stroke-width="1" fill="none"/></svg></div>
<div class="a" style="left:95.05px;top:385.55px"><svg width="7.4" height="7" viewBox="0 0 7.4 7" ><path d="M6.7 0.8 V6.3 H0.9 Z" fill="#6a6a6a" stroke="#2e2e2e" stroke-width="1" stroke-linejoin="round"/></svg></div>
<div class="t" style="left:133.50px;top:379.88px;font-size:12.6px;letter-spacing:0.039px;color:#101010;">Public Key Policies</div>
<div class="a" style="left:131.20px;top:400.49px"><svg width="15" height="14" viewBox="0 0 15 14" ><defs><linearGradient id="g24" x1="0" y1="0" x2="0" y2="1"><stop offset="0" stop-color="#fdf1c0"/><stop offset="1" stop-color="#f8d878"/></linearGradient></defs>
<path d="M7.2 3.2 L8.6 0.5 H14.5 V13 H7.2 Z" fill="#fdf1c0" stroke="#dcc27c" stroke-width="1"/>
<path d="M0.5 1.5 H6.6 C7.6 1.5 7.4 3.4 8.6 3.4 H14.5 V13.3 H0.5 Z" fill="url(#g24)" stroke="#dcc27c" stroke-width="1"/>
<path d="M0.5 13.3 H14.5" stroke="#c9aa5e" stroke-width="1" fill="none"/></svg></div>
<div class="t" style="left:154.20px;top:399.72px;font-size:12.6px;letter-spacing:0.072px;color:#101010;">Encrypting File System</div>
<div class="a" style="left:131.20px;top:420.33px"><svg width="15" height="14" viewBox="0 0 15 14" ><defs><linearGradient id="g25" x1="0" y1="0" x2="0" y2="1"><stop offset="0" stop-color="#fdf1c0"/><stop offset="1" stop-color="#f8d878"/></linearGradient></defs>
<path d="M7.2 3.2 L8.6 0.5 H14.5 V13 H7.2 Z" fill="#fdf1c0" stroke="#dcc27c" stroke-width="1"/>
<path d="M0.5 1.5 H6.6 C7.6 1.5 7.4 3.4 8.6 3.4 H14.5 V13.3 H0.5 Z" fill="url(#g25)" stroke="#dcc27c" stroke-width="1"/>
<path d="M0.5 13.3 H14.5" stroke="#c9aa5e" stroke-width="1" fill="none"/></svg></div>
<div class="t" style="left:154.20px;top:419.57px;font-size:12.6px;letter-spacing:0.178px;color:#101010;">Data Protection</div>
</div>
<div class="box" style="left:367px;top:89.5px;width:18px;height:424px;background:#fcfcfc;border-left:1px solid #dedede"></div>
<div class="box" style="left:367px;top:90.7px;width:17.6px;height:18px;background:#fdfdfd;border-top:1px solid #c6c6c6;border-left:1px solid #b4b4b4"></div>
<div class="a" style="left:371.70px;top:97.60px"><svg width="9" height="7" viewBox="0 0 9 7" ><path d="M0.7 5.6 L4.5 1.8 L8.3 5.6" fill="none" stroke="#6c6c6c" stroke-width="1.5"/></svg></div>
<div class="box" style="left:367px;top:108.8px;width:17.5px;height:327.4px;background:#dcdcdc;border:1px solid #a4a4a4;border-top-color:#b0b0b0;border-right-color:#cfcfcf;border-bottom-color:#b9b9b9"></div>
<div class="box" style="left:372.2px;top:268.4px;width:7.8px;height:1.4px;background:#6f6f6f"></div>
<div class="box" style="left:372.2px;top:271.8px;width:7.8px;height:1.4px;background:#6f6f6f"></div>
<div class="box" style="left:372.2px;top:275.2px;width:7.8px;height:1.4px;background:#6f6f6f"></div>
<div class="box" style="left:384.5px;top:89.5px;width:2.7px;height:424px;background:#d8d8d8"></div>
<div class="box" style="left:387.1px;top:88.5px;width:1px;height:425px;background:#9a9a9a"></div>
<div class="box" style="left:388.1px;top:88px;width:3px;height:425px;background:#f8f8f8"></div>
<div class="box" style="left:391px;top:88.5px;width:479.8px;height:430px;background:#fff;border:1px solid #8f8f8f;border-top-color:#a2a2a2;border-right-color:#7fa0b4"></div>
<div class="box" style="left:392px;top:89.5px;width:477px;height:21px;background:#fafafa;border-bottom:1px solid #e3e3e3"></div>
<div class="t" style="left:400.50px;top:93.53px;font-size:12.6px;letter-spacing:0.322px;color:#101010;">Object Type</div>
<div class="a" style="left:399.00px;top:114.05px"><svg width="15" height="14" viewBox="0 0 15 14" ><defs><linearGradient id="g26" x1="0" y1="0" x2="0" y2="1"><stop offset="0" stop-color="#fdf1c0"/><stop offset="1" stop-color="#f8d878"/></linearGradient></defs>
<path d="M7.2 3.2 L8.6 0.5 H14.5 V13 H7.2 Z" fill="#fdf1c0" stroke="#dcc27c" stroke-width="1"/>
<path d="M0.5 1.5 H6.6 C7.6 1.5 7.4 3.4 8.6 3.4 H14.5 V13.3 H0.5 Z" fill="url(#g26)" stroke="#dcc27c" stroke-width="1"/>
<path d="M0.5 13.3 H14.5" stroke="#c9aa5e" stroke-width="1" fill="none"/></svg></div>
<div class="t" style="left:417.80px;top:114.48px;font-size:12.6px;letter-spacing:0.077px;color:#101010;">Encrypting File System</div>
<div class="a" style="left:399.00px;top:134.97px"><svg width="15" height="14" viewBox="0 0 15 14" ><defs><linearGradient id="g27" x1="0" y1="0" x2="0" y2="1"><stop offset="0" stop-color="#fdf1c0"/><stop offset="1" stop-color="#f8d878"/></linearGradient></defs>
<path d="M7.2 3.2 L8.6 0.5 H14.5 V13 H7.2 Z" fill="#fdf1c0" stroke="#dcc27c" stroke-width="1"/>
<path d="M0.5 1.5 H6.6 C7.6 1.5 7.4 3.4 8.6 3.4 H14.5 V13.3 H0.5 Z" fill="url(#g27)" stroke="#dcc27c" stroke-width="1"/>
<path d="M0.5 13.3 H14.5" stroke="#c9aa5e" stroke-width="1" fill="none"/></svg></div>
<div class="t" style="left:417.80px;top:135.41px;font-size:12.6px;letter-spacing:0.199px;color:#101010;">Data Protection</div>
<div class="a" style="left:399.00px;top:155.90px"><svg width="15" height="14" viewBox="0 0 15 14" ><defs><linearGradient id="g28" x1="0" y1="0" x2="0" y2="1"><stop offset="0" stop-color="#fdf1c0"/><stop offset="1" stop-color="#f8d878"/></linearGradient></defs>
<path d="M7.2 3.2 L8.6 0.5 H14.5 V13 H7.2 Z" fill="#fdf1c0" stroke="#dcc27c" stroke-width="1"/>
<path d="M0.5 1.5 H6.6 C7.6 1.5 7.4 3.4 8.6 3.4 H14.5 V13.3 H0.5 Z" fill="url(#g28)" stroke="#dcc27c" stroke-width="1"/>
<path d="M0.5 13.3 H14.5" stroke="#c9aa5e" stroke-width="1" fill="none"/></svg></div>
<div class="t" style="left:417.80px;top:156.33px;font-size:12.6px;letter-spacing:0.168px;color:#101010;">BitLocker Drive Encryption</div>
<div class="a" style="left:399.00px;top:176.83px"><svg width="15" height="14" viewBox="0 0 15 14" ><defs><linearGradient id="g29" x1="0" y1="0" x2="0" y2="1"><stop offset="0" stop-color="#fdf1c0"/><stop offset="1" stop-color="#f8d878"/></linearGradient></defs>
<path d="M7.2 3.2 L8.6 0.5 H14.5 V13 H7.2 Z" fill="#fdf1c0" stroke="#dcc27c" stroke-width="1"/>
<path d="M0.5 1.5 H6.6 C7.6 1.5 7.4 3.4 8.6 3.4 H14.5 V13.3 H0.5 Z" fill="url(#g29)" stroke="#dcc27c" stroke-width="1"/>
<path d="M0.5 13.3 H14.5" stroke="#c9aa5e" stroke-width="1" fill="none"/></svg></div>
<div class="t" style="left:417.80px;top:177.26px;font-size:12.6px;letter-spacing:0.23px;color:#101010;">BitLocker Drive Encryption Network Unlock Certificate</div>
<div class="a" style="left:399.00px;top:197.75px"><svg width="15" height="14" viewBox="0 0 15 14" ><defs><linearGradient id="g30" x1="0" y1="0" x2="0" y2="1"><stop offset="0" stop-color="#fdf1c0"/><stop offset="1" stop-color="#f8d878"/></linearGradient></defs>
<path d="M7.2 3.2 L8.6 0.5 H14.5 V13 H7.2 Z" fill="#fdf1c0" stroke="#dcc27c" stroke-width="1"/>
<path d="M0.5 1.5 H6.6 C7.6 1.5 7.4 3.4 8.6 3.4 H14.5 V13.3 H0.5 Z" fill="url(#g30)" stroke="#dcc27c" stroke-width="1"/>
<path d="M0.5 13.3 H14.5" stroke="#c9aa5e" stroke-width="1" fill="none"/></svg></div>
<div class="t" style="left:417.80px;top:198.18px;font-size:12.6px;letter-spacing:0.2px;color:#101010;">Automatic Certificate Request Settings</div>
<div class="box" style="left:415.3px;top:216.38px;width:452.6px;height:20.4px;background:#3399ff"></div>
<div class="a" style="left:399.00px;top:218.67px"><svg width="15" height="14" viewBox="0 0 15 14" ><defs><linearGradient id="g31" x1="0" y1="0" x2="0" y2="1"><stop offset="0" stop-color="#9db9cf"/><stop offset="1" stop-color="#7c9fba"/></linearGradient></defs>
<path d="M7.2 3.2 L8.6 0.5 H14.5 V13 H7.2 Z" fill="#9db9cf" stroke="#7f9db5" stroke-width="1"/>
<path d="M0.5 1.5 H6.6 C7.6 1.5 7.4 3.4 8.6 3.4 H14.5 V13.3 H0.5 Z" fill="url(#g31)" stroke="#7f9db5" stroke-width="1"/>
<path d="M0.5 13.3 H14.5" stroke="#6f8da5" stroke-width="1" fill="none"/></svg></div>
<div class="t" style="left:417.80px;top:219.11px;font-size:12.6px;letter-spacing:0.326px;color:#fff;">Trusted Root Certification Authorities</div>
<div class="a" style="left:399.00px;top:239.60px"><svg width="15" height="14" viewBox="0 0 15 14" ><defs><linearGradient id="g32" x1="0" y1="0" x2="0" y2="1"><stop offset="0" stop-color="#fdf1c0"/><stop offset="1" stop-color="#f8d878"/></linearGradient></defs>
<path d="M7.2 3.2 L8.6 0.5 H14.5 V13 H7.2 Z" fill="#fdf1c0" stroke="#dcc27c" stroke-width="1"/>
<path d="M0.5 1.5 H6.6 C7.6 1.5 7.4 3.4 8.6 3.4 H14.5 V13.3 H0.5 Z" fill="url(#g32)" stroke="#dcc27c" stroke-width="1"/>
<path d="M0.5 13.3 H14.5" stroke="#c9aa5e" stroke-width="1" fill="none"/></svg></div>
<div class="t" style="left:417.80px;top:240.03px;font-size:12.6px;letter-spacing:0.041px;color:#101010;">Enterprise Trust</div>
<div class="a" style="left:399.00px;top:260.53px"><svg width="15" height="14" viewBox="0 0 15 14" ><defs><linearGradient id="g33" x1="0" y1="0" x2="0" y2="1"><stop offset="0" stop-color="#fdf1c0"/><stop offset="1" stop-color="#f8d878"/></linearGradient></defs>
<path d="M7.2 3.2 L8.6 0.5 H14.5 V13 H7.2 Z" fill="#fdf1c0" stroke="#dcc27c" stroke-width="1"/>
<path d="M0.5 1.5 H6.6 C7.6 1.5 7.4 3.4 8.6 3.4 H14.5 V13.3 H0.5 Z" fill="url(#g33)" stroke="#dcc27c" stroke-width="1"/>
<path d="M0.5 13.3 H14.5" stroke="#c9aa5e" stroke-width="1" fill="none"/></svg></div>
<div class="t" style="left:417.80px;top:260.96px;font-size:12.6px;letter-spacing:0.429px;color:#101010;">Intermediate Certification Authorities</div>
<div class="a" style="left:399.00px;top:281.45px"><svg width="15" height="14" viewBox="0 0 15 14" ><defs><linearGradient id="g34" x1="0" y1="0" x2="0" y2="1"><stop offset="0" stop-color="#fdf1c0"/><stop offset="1" stop-color="#f8d878"/></linearGradient></defs>
<path d="M7.2 3.2 L8.6 0.5 H14.5 V13 H7.2 Z" fill="#fdf1c0" stroke="#dcc27c" stroke-width="1"/>
<path d="M0.5 1.5 H6.6 C7.6 1.5 7.4 3.4 8.6 3.4 H14.5 V13.3 H0.5 Z" fill="url(#g34)" stroke="#dcc27c" stroke-width="1"/>
<path d="M0.5 13.3 H14.5" stroke="#c9aa5e" stroke-width="1" fill="none"/></svg></div>
<div class="t" style="left:417.80px;top:281.88px;font-size:12.6px;letter-spacing:0.104px;color:#101010;">Trusted Publishers</div>
<div class="a" style="left:399.00px;top:302.38px"><svg width="15" height="14" viewBox="0 0 15 14" ><defs><linearGradient id="g35" x1="0" y1="0" x2="0" y2="1"><stop offset="0" stop-color="#fdf1c0"/><stop offset="1" stop-color="#f8d878"/></linearGradient></defs>
<path d="M7.2 3.2 L8.6 0.5 H14.5 V13 H7.2 Z" fill="#fdf1c0" stroke="#dcc27c" stroke-width="1"/>
<path d="M0.5 1.5 H6.6 C7.6 1.5 7.4 3.4 8.6 3.4 H14.5 V13.3 H0.5 Z" fill="url(#g35)" stroke="#dcc27c" stroke-width="1"/>
<path d="M0.5 13.3 H14.5" stroke="#c9aa5e" stroke-width="1" fill="none"/></svg></div>
<div class="t" style="left:417.80px;top:302.81px;font-size:12.6px;letter-spacing:0.196px;color:#101010;">Untrusted Certificates</div>
<div class="a" style="left:399.00px;top:323.30px"><svg width="15" height="14" viewBox="0 0 15 14" ><defs><linearGradient id="g36" x1="0" y1="0" x2="0" y2="1"><stop offset="0" stop-color="#fdf1c0"/><stop offset="1" stop-color="#f8d878"/></linearGradient></defs>
<path d="M7.2 3.2 L8.6 0.5 H14.5 V13 H7.2 Z" fill="#fdf1c0" stroke="#dcc27c" stroke-width="1"/>
<path d="M0.5 1.5 H6.6 C7.6 1.5 7.4 3.4 8.6 3.4 H14.5 V13.3 H0.5 Z" fill="url(#g36)" stroke="#dcc27c" stroke-width="1"/>
<path d="M0.5 13.3 H14.5" stroke="#c9aa5e" stroke-width="1" fill="none"/></svg></div>
<div class="t" style="left:417.80px;top:323.73px;font-size:12.6px;letter-spacing:0.134px;color:#101010;">Trusted People</div>
<div class="a" style="left:397.70px;top:344.12px"><svg width="17" height="17" viewBox="0 0 17 17" ><rect x="1.6" y="2" width="10.6" height="14" fill="#fdfdfe" stroke="#b9c2d2" stroke-width="0.7"/>
<path d="M0.6 11.6 V0.6 H16.6 V11.6 H13.6" fill="none" stroke="#8a8a8a" stroke-width="1.1"/>
<rect x="1.2" y="1.2" width="14.8" height="9.8" fill="#ffffff" opacity="0.001"/>
<path d="M3.2 3.8 H13.6" stroke="#8d99b8" stroke-width="1.4"/>
<path d="M3.2 6 H9" stroke="#d5d9e4" stroke-width="0.9"/>
<path d="M3.6 9 L5 10.8 L7.8 7.4" fill="none" stroke="#c0392b" stroke-width="1.3"/>
<path d="M3 13.6 H9 M3 15 H8" stroke="#9ec3e6" stroke-width="1"/>
<path d="M10.2 11.5 L9.4 15.6 L11.4 14.2 L12.8 15.8 L13.2 11.5 Z" fill="#2b3f9a"/>
<circle cx="11.6" cy="9.6" r="2.7" fill="#e5b91f" stroke="#c4960f" stroke-width="0.7"/>
<circle cx="11.2" cy="9.1" r="1" fill="#f6dc6a"/></svg></div>
<div class="t" style="left:417.80px;top:344.66px;font-size:12.6px;letter-spacing:0.189px;color:#101010;">Certificate Services Client - Certificate Enrollment Policy</div>
<div class="a" style="left:397.70px;top:365.05px"><svg width="17" height="17" viewBox="0 0 17 17" ><rect x="1.6" y="2" width="10.6" height="14" fill="#fdfdfe" stroke="#b9c2d2" stroke-width="0.7"/>
<path d="M0.6 11.6 V0.6 H16.6 V11.6 H13.6" fill="none" stroke="#8a8a8a" stroke-width="1.1"/>
<rect x="1.2" y="1.2" width="14.8" height="9.8" fill="#ffffff" opacity="0.001"/>
<path d="M3.2 3.8 H13.6" stroke="#8d99b8" stroke-width="1.4"/>
<path d="M3.2 6 H9" stroke="#d5d9e4" stroke-width="0.9"/>
<path d="M3.6 9 L5 10.8 L7.8 7.4" fill="none" stroke="#c0392b" stroke-width="1.3"/>
<path d="M3 13.6 H9 M3 15 H8" stroke="#9ec3e6" stroke-width="1"/>
<path d="M10.2 11.5 L9.4 15.6 L11.4 14.2 L12.8 15.8 L13.2 11.5 Z" fill="#2b3f9a"/>
<circle cx="11.6" cy="9.6" r="2.7" fill="#e5b91f" stroke="#c4960f" stroke-width="0.7"/>
<circle cx="11.2" cy="9.1" r="1" fill="#f6dc6a"/></svg></div>
<div class="t" style="left:417.80px;top:365.58px;font-size:12.6px;letter-spacing:0.2px;color:#101010;">Certificate Path Validation Settings</div>
<div class="a" style="left:397.70px;top:385.98px"><svg width="17" height="17" viewBox="0 0 17 17" ><rect x="1.6" y="2" width="10.6" height="14" fill="#fdfdfe" stroke="#b9c2d2" stroke-width="0.7"/>
<path d="M0.6 11.6 V0.6 H16.6 V11.6 H13.6" fill="none" stroke="#8a8a8a" stroke-width="1.1"/>
<rect x="1.2" y="1.2" width="14.8" height="9.8" fill="#ffffff" opacity="0.001"/>
<path d="M3.2 3.8 H13.6" stroke="#8d99b8" stroke-width="1.4"/>
<path d="M3.2 6 H9" stroke="#d5d9e4" stroke-width="0.9"/>
<path d="M3.6 9 L5 10.8 L7.8 7.4" fill="none" stroke="#c0392b" stroke-width="1.3"/>
<path d="M3 13.6 H9 M3 15 H8" stroke="#9ec3e6" stroke-width="1"/>
<path d="M10.2 11.5 L9.4 15.6 L11.4 14.2 L12.8 15.8 L13.2 11.5 Z" fill="#2b3f9a"/>
<circle cx="11.6" cy="9.6" r="2.7" fill="#e5b91f" stroke="#c4960f" stroke-width="0.7"/>
<circle cx="11.2" cy="9.1" r="1" fill="#f6dc6a"/></svg></div>
<div class="t" style="left:417.80px;top:386.51px;font-size:12.6px;letter-spacing:0.262px;color:#101010;">Certificate Services Client - Auto-Enrollment</div>
<div class="box" style="left:619px;top:229.6px;width:150px;height:116.3px;background:#f0f0f0;border:1px solid #959595"></div>
<div class="box" style="left:652.2px;top:232px;width:1px;height:112px;background:#dcdcdc"></div>
<div class="box" style="left:653.2px;top:232px;width:1px;height:112px;background:#fcfcfc"></div>
<div class="box" style="left:653.4px;top:258.6px;width:112px;height:1px;background:#d7d7d7"></div>
<div class="box" style="left:653.4px;top:259.6px;width:112px;height:1px;background:#fbfbfb"></div>
<div class="box" style="left:653.4px;top:287.1px;width:112px;height:1px;background:#d7d7d7"></div>
<div class="box" style="left:653.4px;top:288.1px;width:112px;height:1px;background:#fbfbfb"></div>
<div class="box" style="left:653.4px;top:315.7px;width:112px;height:1px;background:#d7d7d7"></div>
<div class="box" style="left:653.4px;top:316.7px;width:112px;height:1px;background:#fbfbfb"></div>
<div class="t" style="left:658.40px;top:236.93px;font-size:12.6px;letter-spacing:0.327px;color:#101010;">Import...</div>
<div class="t" style="left:658.40px;top:265.43px;font-size:12.6px;letter-spacing:0.066px;color:#101010;">All Tasks</div>
<div class="t" style="left:658.40px;top:293.93px;font-size:12.6px;letter-spacing:-0.368px;color:#101010;">Refresh</div>
<div class="t" style="left:658.40px;top:322.43px;font-size:12.6px;letter-spacing:0.265px;color:#101010;">Help</div>
<div class="a" style="left:752.00px;top:269.20px"><svg width="5" height="8" viewBox="0 0 5 8" ><path d="M0.4 0.4 V7.6 L4.4 4 Z" fill="#222"/></svg></div>
<div class="box" style="left:650.2px;top:229.5px;width:74.4px;height:32.6px;border:3px solid #fb0007;border-radius:3.5px"></div>
</body></html>
